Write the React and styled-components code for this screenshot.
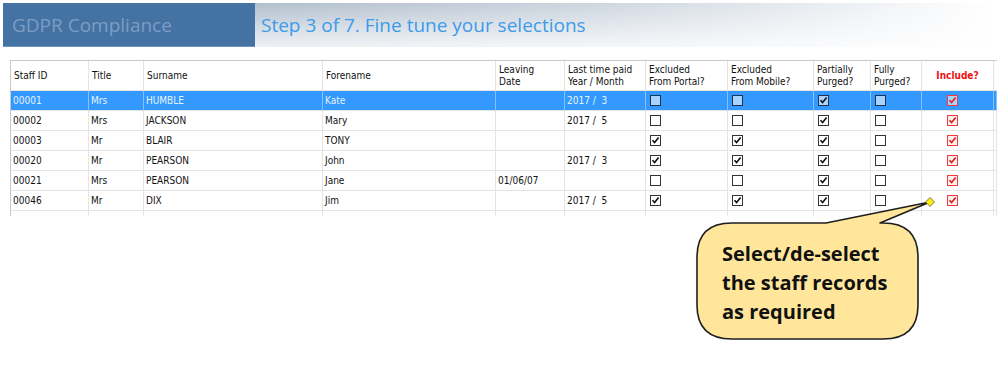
import React from "react";
import styled, { createGlobalStyle } from "styled-components";

const Global = createGlobalStyle`
  html, body { margin: 0; padding: 0; background: #ffffff; }
  body { width: 997px; height: 375px; overflow: hidden; }
`;

const Page = styled.div`
  position: relative;
  width: 997px;
  height: 375px;
  padding-top: 3px;
  box-sizing: border-box;
`;

const Banner = styled.div`
  display: flex;
  height: 44px;
  margin-left: 3px;
`;

const BrandBlock = styled.div`
  width: 252px;
  background: #4473a3;
  border-bottom: 1px solid #6b94c0;
  display: flex;
  align-items: center;
  padding-left: 9px;
  box-sizing: border-box;
  font-family: "Open Sans", "Noto Sans", sans-serif;
  font-size: 19px;
  color: #7c9dc3;
`;

const StepBlock = styled.div`
  flex: 1;
  display: flex;
  align-items: center;
  padding-left: 6px;
  background:
    linear-gradient(to right, rgba(255,255,255,0) 0%, rgba(255,255,255,0.35) 45%, rgba(255,255,255,1) 100%),
    linear-gradient(to bottom, #b2bfcd 0%, #dde3ea 70%, #eef1f5 100%);
  font-family: "Open Sans", "Noto Sans", sans-serif;
  font-size: 19px;
  color: #3d9be9;
`;

const Grid = styled.div`
  margin-top: 13px;
  margin-left: 10px;
  border-top: 1px solid #c9c9c9;
  border-left: 1px solid #c9c9c9;
  font-family: "Liberation Sans Narrow", "DejaVu Sans Condensed", "Liberation Sans", sans-serif;
  font-size: 10px;
  color: #111;
`;

const cols = "78px 55px 179px 173px 69px 81px 82px 86px 57px 51px 72px 1fr";

const HeaderRow = styled.div`
  display: grid;
  grid-template-columns: ${cols};
  height: 30px;
`;

const HeadCell = styled.div`
  border-right: 1px solid #e4e4e4;
  border-bottom: 1px solid #e4e4e4;
  padding: 0 3px;
  display: flex;
  align-items: center;
  justify-content: ${(p) => (p.$center ? "center" : "flex-start")};
  line-height: 12px;
  color: ${(p) => (p.$accent ? "#ee1111" : "#111")};
  font-weight: ${(p) => (p.$accent ? "bold" : "normal")};
`;

const Row = styled.div`
  display: grid;
  grid-template-columns: ${cols};
  height: ${(p) => (p.$filler ? "5px" : "20px")};
  background: ${(p) => (p.$selected ? "#3399ff" : "#ffffff")};
  color: ${(p) => (p.$selected ? "#e8f2ff" : "#111")};
`;

const Cell = styled.div`
  border-right: 1px solid ${(p) => (p.$selected ? "#86c1ff" : "#e4e4e4")};
  border-bottom: ${(p) => (p.$filler ? "none" : "1px solid #e4e4e4")};
  padding-left: ${(p) => p.$pad ?? 2}px;
  display: flex;
  align-items: center;
  white-space: pre;
  overflow: hidden;
`;

const Box = styled.span`
  width: 11px;
  height: 11px;
  box-sizing: border-box;
  border: 1px solid ${(p) => (p.$red ? "#f03c3c" : p.$selected ? "#1d3250" : "#333")};
  background: ${(p) => (p.$selected ? "#a9d3ff" : p.$red ? "#fff0f0" : "#fff")};
  display: inline-flex;
  align-items: center;
  justify-content: center;
`;

function Check({ checked, red, selected }) {
  return (
    <Box $red={red} $selected={selected}>
      {checked && (
        <svg width="9" height="9" viewBox="0 0 9 9">
          <path
            d="M1.5 4.2 L3.6 6.6 L7.6 1.6"
            fill="none"
            stroke={red ? "#e61c1c" : "#111"}
            strokeWidth="1.6"
          />
        </svg>
      )}
    </Box>
  );
}

const rows = [
  ["00001", "Mrs", "HUMBLE", "Kate", "", "2017 /  3", false, false, true, false, true],
  ["00002", "Mrs", "JACKSON", "Mary", "", "2017 /  5", false, false, true, false, true],
  ["00003", "Mr", "BLAIR", "TONY", "", "", true, true, true, false, true],
  ["00020", "Mr", "PEARSON", "John", "", "2017 /  3", true, true, true, false, true],
  ["00021", "Mrs", "PEARSON", "Jane", "01/06/07", "", false, false, true, false, true],
  ["00046", "Mr", "DIX", "Jim", "", "2017 /  5", true, true, true, false, true],
];

const Callout = styled.div`
  position: absolute;
  left: 690px;
  top: 195px;
  width: 250px;
  height: 152px;
`;

const CalloutText = styled.div`
  position: absolute;
  left: 32px;
  top: 44px;
  font-family: "Open Sans", "Noto Sans", sans-serif;
  font-weight: bold;
  font-size: 20px;
  line-height: 29px;
  color: #111;
`;

export default function App() {
  return (
    <Page>
      <Global />
      <Banner>
        <BrandBlock>GDPR Compliance</BrandBlock>
        <StepBlock>Step 3 of 7. Fine tune your selections</StepBlock>
      </Banner>
      <Grid>
        <HeaderRow>
          <HeadCell>Staff ID</HeadCell>
          <HeadCell>Title</HeadCell>
          <HeadCell>Surname</HeadCell>
          <HeadCell>Forename</HeadCell>
          <HeadCell>Leaving<br />Date</HeadCell>
          <HeadCell>Last time paid<br />Year / Month</HeadCell>
          <HeadCell>Excluded<br />From Portal?</HeadCell>
          <HeadCell>Excluded<br />From Mobile?</HeadCell>
          <HeadCell>Partially<br />Purged?</HeadCell>
          <HeadCell>Fully<br />Purged?</HeadCell>
          <HeadCell $center $accent>Include?</HeadCell>
          <HeadCell />
        </HeaderRow>
        {rows.map((r, i) => {
          const sel = i === 0;
          return (
            <Row key={r[0]} $selected={sel}>
              <Cell $selected={sel}>{r[0]}</Cell>
              <Cell $selected={sel}>{r[1]}</Cell>
              <Cell $selected={sel}>{r[2]}</Cell>
              <Cell $selected={sel}>{r[3]}</Cell>
              <Cell $selected={sel}>{r[4]}</Cell>
              <Cell $selected={sel}>{r[5]}</Cell>
              <Cell $selected={sel} $pad={4}><Check checked={r[6]} selected={sel} /></Cell>
              <Cell $selected={sel} $pad={4}><Check checked={r[7]} selected={sel} /></Cell>
              <Cell $selected={sel} $pad={4}><Check checked={r[8]} selected={sel} /></Cell>
              <Cell $selected={sel} $pad={4}><Check checked={r[9]} selected={sel} /></Cell>
              <Cell $selected={sel} $pad={25}><Check checked={r[10]} red selected={sel} /></Cell>
              <Cell $selected={sel} />
            </Row>
          );
        })}
        <Row $filler>
          {Array.from({ length: 12 }).map((_, k) => (
            <Cell key={k} $filler />
          ))}
        </Row>
      </Grid>
      <Callout>
        <svg width="250" height="152" viewBox="0 0 250 152">
          <path
            d="M42 28 H136 L240 7 L190 28 H193 Q228 28 228 62 V110 Q228 144 193 144 H42 Q7 144 7 110 V62 Q7 28 42 28 Z"
            fill="#ffe69b"
            stroke="#1e1e1e"
            strokeWidth="1.6"
            strokeLinejoin="round"
          />
          <path d="M240 2.5 L244.5 7 L240 11.5 L235.5 7 Z" fill="#ffee00" stroke="#555" strokeWidth="0.8" />
        </svg>
        <CalloutText>
          Select/de-select
          <br />
          the staff records
          <br />
          as required
        </CalloutText>
      </Callout>
    </Page>
  );
}
